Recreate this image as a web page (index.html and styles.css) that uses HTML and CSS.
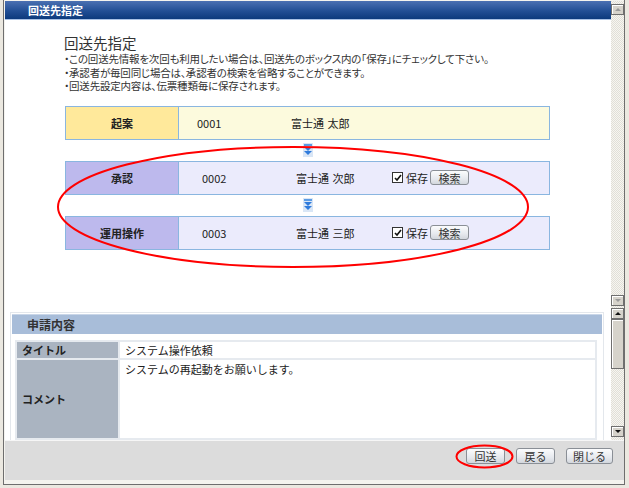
FILE: index.html
```html
<!DOCTYPE html>
<html lang="ja">
<head>
    <meta charset="UTF-8">
    <title>回送先指定</title>
    <link rel="stylesheet" href="styles.css">
</head>
<body>
    <div class="window">
        <div class="pane top-pane">
            <div class="pane-body">
                <div class="titlebar">回送先指定</div>
                <div class="intro">
                    <h1>回送先指定</h1>
                    <ul class="notes">
                        <li>・この回送先情報を次回も利用したい場合は、回送先のボックス内の「保存」にチェックして下さい。</li>
                        <li>・承認者が毎回同じ場合は、承認者の検索を省略することができます。</li>
                        <li>・回送先設定内容は、伝票種類毎に保存されます。</li>
                    </ul>
                </div>

                <div class="route">
                    <div class="step step-start">
                        <div class="step-label">起案</div>
                        <div class="step-value">
                            <span class="num">0001</span>
                            <span class="name">富士通 太郎</span>
                        </div>
                    </div>
                    <div class="step-arrow">
                        <svg width="10" height="14" viewBox="0 0 10 14"><rect width="10" height="14" fill="#d9e6f6"/><rect x="1" y="1" width="8" height="2" fill="#5b9be4"/><path d="M1 4h8L5 8z" fill="#2f7bdc"/><path d="M1 8h8L5 12z" fill="#2f7bdc"/></svg>
                    </div>
                    <div class="step">
                        <div class="step-label">承認</div>
                        <div class="step-value">
                            <span class="num">0002</span>
                            <span class="name">富士通 次郎</span>
                            <span class="keep"><span class="check"><svg width="8" height="8" viewBox="0 0 8 8"><path d="M1 4l2 2 4-5" fill="none" stroke="#111" stroke-width="1.6"/></svg></span>保存</span>
                            <button class="btn btn-search">検索</button>
                        </div>
                    </div>
                    <div class="step-arrow">
                        <svg width="10" height="14" viewBox="0 0 10 14"><rect width="10" height="14" fill="#d9e6f6"/><rect x="1" y="1" width="8" height="2" fill="#5b9be4"/><path d="M1 4h8L5 8z" fill="#2f7bdc"/><path d="M1 8h8L5 12z" fill="#2f7bdc"/></svg>
                    </div>
                    <div class="step">
                        <div class="step-label">運用操作</div>
                        <div class="step-value">
                            <span class="num">0003</span>
                            <span class="name">富士通 三郎</span>
                            <span class="keep"><span class="check"><svg width="8" height="8" viewBox="0 0 8 8"><path d="M1 4l2 2 4-5" fill="none" stroke="#111" stroke-width="1.6"/></svg></span>保存</span>
                            <button class="btn btn-search">検索</button>
                        </div>
                    </div>
                </div>

                <svg class="mark" width="606" height="305"><ellipse cx="288" cy="206" rx="235" ry="60" fill="none" stroke="#f00" stroke-width="2"/></svg>
            </div>
            <div class="vscroll">
                <div class="sb-btn"><span class="tri-up off"></span></div>
                <div class="sb-track"></div>
                <div class="sb-btn"><span class="tri-down off"></span></div>
            </div>
        </div>

        <div class="pane lower-pane">
            <div class="pane-body">
                <div class="section">
                    <div class="section-head">申請内容</div>
                    <table class="detail">
                        <tr>
                            <th>タイトル</th>
                            <td>システム操作依頼</td>
                        </tr>
                        <tr class="comment-row">
                            <th>コメント</th>
                            <td>システムの再起動をお願いします。</td>
                        </tr>
                    </table>
                </div>
            </div>
            <div class="vscroll">
                <div class="sb-btn"><span class="tri-up"></span></div>
                <div class="sb-thumb"></div>
                <div class="sb-track"></div>
                <div class="sb-btn"><span class="tri-down"></span></div>
            </div>
        </div>

        <div class="footer">
            <button class="btn">回送</button>
            <button class="btn">戻る</button>
            <button class="btn btn-wide">閉じる</button>
            <svg class="mark" width="619" height="40"><ellipse cx="479.5" cy="15.5" rx="28" ry="11" fill="none" stroke="#f00" stroke-width="2"/></svg>
        </div>
    </div>
</body>
</html>
```

FILE: styles.css
```css
body {
    margin: 0;
    width: 629px;
    height: 488px;
    overflow: hidden;
    background: #ebe8e0;
    font-family: "Noto Sans CJK JP", "Liberation Sans", sans-serif;
    font-size: 11px;
    color: #222;
}
.window {
    margin: 0 4px 3px 3px;
    height: 485px;
    box-sizing: border-box;
    padding: 1px 0 4px 1px;
    border: 1px solid #6e6e6e;
    border-top: none;
    background: #f4f3ee;
    display: flex;
    flex-direction: column;
}
.pane {
    display: flex;
}
.top-pane {
    height: 305px;
}
.lower-pane {
    height: 134px;
}
.pane-body {
    flex: 1;
    position: relative;
    overflow: hidden;
    background: #fff;
}
.mark {
    position: absolute;
    left: 0;
    top: 0;
    pointer-events: none;
}

/* title */
.titlebar {
    height: 18px;
    line-height: 18px;
    padding-left: 23px;
    background: linear-gradient(#4b70b2, #224f95 55%, #0c3a7d);
    border-bottom: 1px solid #a9c2e6;
    color: #fff;
    font-weight: bold;
    font-size: 11px;
}
.intro {
    padding: 15px 0 0 59px;
}
h1 {
    margin: 0 0 1px;
    font-size: 14.5px;
    font-weight: normal;
    line-height: 16px;
    color: #333;
}
.notes {
    list-style: none;
    margin: 0;
    padding: 0;
    font-size: 10.5px;
    line-height: 13.5px;
    color: #333;
    font-feature-settings: "palt";
    letter-spacing: -0.2px;
}

/* route steps */
.route {
    margin: 13px 0 0 60px;
    width: 485px;
}
.step {
    display: flex;
    height: 34px;
    box-sizing: border-box;
    border: 1px solid #8ab6e0;
    background: #ebebfc;
}
.step-label {
    width: 112px;
    border-right: 1px solid #8ab6e0;
    background: #bdb9ed;
    display: flex;
    align-items: center;
    justify-content: center;
    font-weight: bold;
    font-size: 11px;
}
.step-value {
    flex: 1;
    display: flex;
    align-items: center;
    padding-left: 23px;
}
.step-start {
    background: #fcfadd;
}
.step-start .step-label {
    background: #ffe99b;
}
.step-start .step-value {
    padding-left: 18px;
}
.num {
    width: 94px;
}
.name {
    width: 96px;
    word-spacing: 1px;
}
.keep {
    display: flex;
    align-items: center;
    gap: 3px;
    margin-right: 2px;
}
.check {
    width: 9px;
    height: 9px;
    border: 1px solid #333;
    background: #fff;
    display: flex;
    align-items: center;
    justify-content: center;
}
.step-arrow {
    height: 21px;
    display: flex;
    align-items: center;
    justify-content: center;
}

/* buttons */
.btn {
    height: 16px;
    padding: 0;
    border: 1px solid #8a8f96;
    border-radius: 3px;
    background: linear-gradient(#fbfcfd, #e6e9ee 60%, #d3d7dd);
    font-family: inherit;
    font-size: 11px;
    line-height: 14px;
    color: #333;
    width: 39px;
}
.btn-search {
    height: 15px;
}
.btn-wide {
    width: 47px;
}

/* scrollbars */
.vscroll {
    width: 13px;
    display: flex;
    flex-direction: column;
    background: repeating-conic-gradient(#f6f5f1 0 25%, #e1dfd7 0 50%) 0 0 / 2px 2px;
}
.top-pane .vscroll {
    padding: 3px 0 0;
}
.lower-pane .vscroll {
    padding: 2px 0 3px;
}
.sb-btn {
    height: 11px;
    box-sizing: border-box;
    border: 1px solid #6f6f6f;
    box-shadow: inset 1px 1px #fff;
    background: #d6d3cb;
    display: flex;
    align-items: center;
    justify-content: center;
}
.sb-track {
    flex: 1;
}
.sb-thumb {
    height: 50px;
    box-sizing: border-box;
    border: 1px solid #6f6f6f;
    box-shadow: inset 1px 1px #fff;
    background: #d6d3cb;
}
.tri-up {
    border: 3px solid transparent;
    border-top: 0;
    border-bottom: 3px solid #111;
}
.tri-down {
    border: 3px solid transparent;
    border-bottom: 0;
    border-top: 3px solid #111;
}
.tri-up.off {
    border-bottom-color: #9a9a9a;
}
.tri-down.off {
    border-top-color: #9a9a9a;
}

/* request details */
.section {
    margin: 6px 7px 0 5px;
    border: 1px solid #e3e7ec;
    padding: 1px;
}
.section-head {
    height: 20px;
    line-height: 20px;
    padding-left: 15px;
    background: #a8bdd9;
    border-top: 1px solid #c9d6e8;
    box-sizing: border-box;
    font-weight: bold;
    font-size: 12px;
    color: #333;
}
.detail {
    margin: 6px 5px 0 3px;
    width: calc(100% - 8px);
    border-collapse: collapse;
}
.detail th,
.detail td {
    border: 2px solid #e6eaef;
    height: 14px;
    padding: 0 5px;
    font-size: 11px;
}
.detail th {
    width: 91px;
    text-align: left;
    background: #aab4c1;
    font-weight: bold;
}
.comment-row th {
    height: 78px;
}
.comment-row td {
    vertical-align: top;
    padding-top: 1px;
}

/* footer */
.footer {
    position: relative;
    height: 40px;
    box-sizing: border-box;
    border-top: 1px solid #f6f6f6;
    background: #dcdcdc;
    display: flex;
    justify-content: flex-end;
    align-items: flex-start;
    gap: 11px;
    padding: 7px 11px 0 0;
}
```
